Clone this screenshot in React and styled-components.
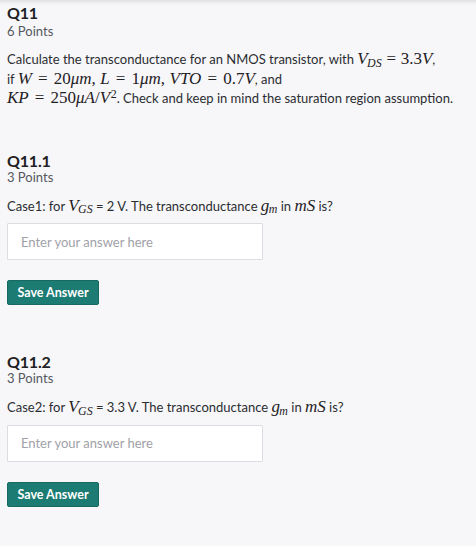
import React from "react";
import styled, { createGlobalStyle } from "styled-components";

const GlobalStyle = createGlobalStyle`
  html, body {
    margin: 0;
    background: #f7f7f9;
  }
  body {
    font-family: Lato, "Open Sans", "Liberation Sans", sans-serif;
    color: #2b2d31;
  }
`;

const Page = styled.main`
  min-height: 546px;
  box-sizing: border-box;
  padding: 3px 7px 0;
  box-shadow: inset 0 6px 5px -5px rgba(0, 0, 0, 0.14);
`;

const Question = styled.section`
  margin-bottom: ${(p) => p.$gap || 0}px;
`;

const Heading = styled.h2`
  margin: 0;
  font-size: 16px;
  line-height: ${(p) => (p.$sub ? 16 : 20)}px;
  font-weight: 700;
  color: #1f2124;
  letter-spacing: -0.2px;
`;

const Points = styled.div`
  font-size: 13px;
  line-height: 16px;
  color: #55585e;
`;

const Prompt = styled.p`
  margin: ${(p) => p.$top}px 0 0;
  font-size: 13px;
  line-height: 19.5px;
  color: #2b2d31;
  white-space: nowrap;
`;

const Math = styled.span`
  font-family: "Liberation Serif", "DejaVu Serif", serif;
  font-size: 17px;
  line-height: 0;
  color: #1f2124;
  white-space: nowrap;
`;

const Var = styled.i`
  font-style: italic;
`;

const Sub = styled.span`
  font-size: 0.7em;
  position: relative;
  top: 0.25em;
  margin-left: -0.05em;
`;

const Sup = styled.span`
  font-size: 0.7em;
  position: relative;
  top: -0.45em;
  margin-left: 0.05em;
`;

const Eq = styled.span`
  margin: 0 ${(p) => (p.$tight ? 0.28 : 0.36)}em;
  font-style: normal;
`;

const Comma = styled.span`
  margin-right: 0.26em;
`;

const AnswerInput = styled.input`
  display: block;
  box-sizing: border-box;
  width: 256px;
  height: 37px;
  margin-top: ${(p) => p.$top}px;
  padding: 0 13px;
  border: 1px solid #dcdde2;
  border-radius: 1px;
  background: #fff;
  font-family: Lato, "Open Sans", "Liberation Sans", sans-serif;
  font-size: 13px;
  color: #2b2d31;
  outline: none;

  &::placeholder {
    color: #9fa1a8;
  }
`;

const SaveButton = styled.button`
  display: block;
  box-sizing: border-box;
  width: 92px;
  height: 25px;
  margin-top: 20px;
  padding: 0;
  border: 1px solid #166a62;
  border-radius: 2px;
  background: #1c7b72;
  color: #fff;
  font-family: Lato, "Open Sans", "Liberation Sans", sans-serif;
  font-size: 12.5px;
  font-weight: 700;
  cursor: pointer;
`;

const parts = [
  { id: "Q11.1", label: "Case1", vgs: "2" },
  { id: "Q11.2", label: "Case2", vgs: "3.3" },
];

function MicroUnit({ unit }) {
  return (
    <>
      <Var>μ</Var>
      <Var>{unit}</Var>
    </>
  );
}

export default function App() {
  return (
    <>
      <GlobalStyle />
      <Page>
        <Question $gap={44}>
          <Heading>Q11</Heading>
          <Points>6 Points</Points>
          <Prompt $top={11}>
            Calculate the transconductance for an NMOS transistor, with{" "}
            <Math>
              <Var>V</Var>
              <Sub>
                <Var>DS</Var>
              </Sub>
              <Eq $tight>=</Eq>3.3<Var>V</Var>
            </Math>
            ,
            <br />
            if{" "}
            <Math>
              <Var>W</Var>
              <Eq>=</Eq>20
              <MicroUnit unit="m" />
              <Comma>,</Comma>
              <Var>L</Var>
              <Eq>=</Eq>1
              <MicroUnit unit="m" />
              <Comma>,</Comma>
              <Var>VTO</Var>
              <Eq>=</Eq>0.7<Var>V</Var>
            </Math>
            , and
            <br />
            <Math>
              <Var>KP</Var>
              <Eq>=</Eq>250
              <MicroUnit unit="A" />/<Var>V</Var>
              <Sup>2</Sup>
            </Math>
            . Check and keep in mind the saturation region assumption.
          </Prompt>
        </Question>

        {parts.map((part) => (
          <Question key={part.id} $gap={49}>
            <Heading $sub>{part.id}</Heading>
            <Points>3 Points</Points>
            <Prompt $top={12}>
              {part.label}: for{" "}
              <Math>
                <Var>V</Var>
                <Sub>
                  <Var>GS</Var>
                </Sub>
              </Math>{" "}
              = {part.vgs} V. The transconductance{" "}
              <Math>
                <Var>g</Var>
                <Sub>
                  <Var>m</Var>
                </Sub>
              </Math>{" "}
              in{" "}
              <Math>
                <Var>mS</Var>
              </Math>{" "}
              is?
            </Prompt>
            <AnswerInput $top={7} placeholder="Enter your answer here" />
            <SaveButton type="button">Save Answer</SaveButton>
          </Question>
        ))}
      </Page>
    </>
  );
}
